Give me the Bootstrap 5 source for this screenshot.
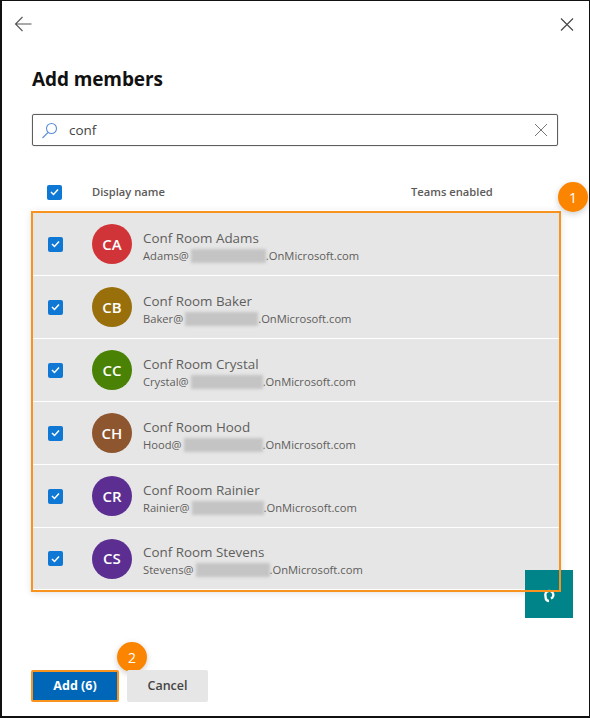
<!DOCTYPE html>
<html lang="en">
<head>
    <meta charset="UTF-8">
    <title>Add members</title>
    <link href="https://cdn.jsdelivr.net/npm/bootstrap@5.3.0/dist/css/bootstrap.min.css" rel="stylesheet">
    <style>
        html, body { margin: 0; height: 100%; background: #fff; }
        body { font-family: "Open Sans", "Noto Sans", sans-serif; color: #323130; }
        .panel-frame { position: relative; width: 590px; height: 718px; border: 2px solid #111; border-top-width: 1px; border-right-width: 1px; overflow: hidden; }
        .top-bar { height: 46px; padding: 14px 15px 0 12px; }
        .panel-title { font-size: 19px; font-weight: 700; color: #111; margin: 17px 0 0 30px; line-height: 30px; letter-spacing: -.1px; }
        .search-box { height: 32px; margin: 20px 31px 0 30px; border: 1px solid #605e5c; border-radius: 2px; padding: 0 9px 0 8px; font-size: 13.5px; color: #444; box-shadow: 0 0 1px #777; }
        .search-text { margin-left: 11px; flex: 1; }
        .head-row { height: 28px; margin: 32px 0 0 45px; font-size: 11.2px; font-weight: 600; color: #5c5a58; }
        .col-name { margin-left: 30px; width: 319px; }
        .check-box { width: 15px; height: 15px; border-radius: 2px; background: #0f78d4; flex: none; display: flex; align-items: center; justify-content: center; }
        .member-box { margin: 4px 0 0 29px; width: 530px; height: 381px; border: 2px solid transparent; padding: 1px 0 0 0; box-shadow: 0 2px 7px rgba(0,0,0,.12); }
        .member-row { height: 62px; margin-bottom: 1px; background: #e6e6e6; padding-left: 15px; }
        .member-row:last-child { margin-bottom: 0; height: 61px; }
        .avatar { width: 40px; height: 40px; border-radius: 50%; color: #fff; font-size: 15px; font-weight: 600; margin-left: 29px; flex: none; }
        .member-info { margin-left: 11px; margin-top: 4px; }
        .member-name { font-size: 13.4px; color: #605e5c; line-height: 18px; }
        .member-mail { font-size: 11.2px; color: #5f5d5b; white-space: nowrap; line-height: 17px; }
        .blur-out { display: inline-block; height: 14px; margin-left: 2px; vertical-align: -3px; background: #c4c4c4; filter: blur(1.5px); }
        .step-badge { position: absolute; width: 30px; height: 30px; border-radius: 50%; background: #fb8500; color: #fff; font-size: 14px; font-weight: 400; display: flex; align-items: center; justify-content: center; box-shadow: 0 2px 6px rgba(0,0,0,.2); }
        .teams-tile { position: absolute; left: 523px; top: 569px; width: 48px; height: 48px; background: #008489; }
        .orange-over { position: absolute; left: 29px; top: 210px; width: 530px; height: 381px; border: 2px solid #f7931e; pointer-events: none; }
        .footer-bar { position: absolute; left: 29px; top: 669px; }
        .btn-add, .btn-add:hover { width: 88px; height: 32px; background: #0067b8; color: #fff; border: 2px solid #f7931e; border-radius: 2px; font-size: 12.5px; font-weight: 700; padding: 0; }
        .btn-cancel, .btn-cancel:hover { width: 81px; height: 32px; background: #e6e6e6; color: #444; border: 0; border-radius: 2px; font-size: 12.5px; font-weight: 600; padding: 0; }
    </style>
</head>
<body>
<div class="panel-frame">
    <div class="top-bar d-flex justify-content-between">
        <svg width="18" height="18" viewBox="0 0 18 18" fill="none" stroke="#555" stroke-width="1.1"><path d="M1.5 9H17.5M8.5 2L1.5 9L8.5 16"/></svg>
        <svg width="14" height="18" viewBox="0 0 14 18" fill="none" stroke="#444" stroke-width="1.1"><path d="M1 3.5L13 15.5M13 3.5L1 15.5"/></svg>
    </div>
    <div class="panel-title">Add members</div>
    <div class="search-box d-flex align-items-center">
        <svg width="17" height="17" viewBox="0 0 17 17" fill="none" stroke="#5a8fd8" stroke-width="1.1"><circle cx="10.5" cy="6.5" r="5"/><path d="M7 10.5L1.5 16"/></svg>
        <span class="search-text">conf</span>
        <svg width="14" height="14" viewBox="0 0 14 14" fill="none" stroke="#777" stroke-width="1"><path d="M1 1L13 13M13 1L1 13"/></svg>
    </div>
    <div class="head-row d-flex align-items-center">
        <span class="check-box"><svg width="9" height="8" viewBox="0 0 9 8" fill="none" stroke="#fff" stroke-width="1.5"><path d="M1 4L3.5 6.5L8 1.5"/></svg></span>
        <span class="col-name">Display name</span>
        <span>Teams enabled</span>
    </div>
    <div class="member-box">
        <div class="member-row d-flex align-items-center">
            <span class="check-box"><svg width="9" height="8" viewBox="0 0 9 8" fill="none" stroke="#fff" stroke-width="1.5"><path d="M1 4L3.5 6.5L8 1.5"/></svg></span>
            <div class="avatar d-flex align-items-center justify-content-center" style="background:#d13438">CA</div>
            <div class="member-info">
                <div class="member-name">Conf Room Adams</div>
                <div class="member-mail">Adams@<span class="blur-out" style="width:75px"></span>.OnMicrosoft.com</div>
            </div>
        </div>
        <div class="member-row d-flex align-items-center">
            <span class="check-box"><svg width="9" height="8" viewBox="0 0 9 8" fill="none" stroke="#fff" stroke-width="1.5"><path d="M1 4L3.5 6.5L8 1.5"/></svg></span>
            <div class="avatar d-flex align-items-center justify-content-center" style="background:#986f0b">CB</div>
            <div class="member-info">
                <div class="member-name">Conf Room Baker</div>
                <div class="member-mail">Baker@<span class="blur-out" style="width:73px"></span>.OnMicrosoft.com</div>
            </div>
        </div>
        <div class="member-row d-flex align-items-center">
            <span class="check-box"><svg width="9" height="8" viewBox="0 0 9 8" fill="none" stroke="#fff" stroke-width="1.5"><path d="M1 4L3.5 6.5L8 1.5"/></svg></span>
            <div class="avatar d-flex align-items-center justify-content-center" style="background:#498205">CC</div>
            <div class="member-info">
                <div class="member-name">Conf Room Crystal</div>
                <div class="member-mail">Crystal@<span class="blur-out" style="width:72px"></span>.OnMicrosoft.com</div>
            </div>
        </div>
        <div class="member-row d-flex align-items-center">
            <span class="check-box"><svg width="9" height="8" viewBox="0 0 9 8" fill="none" stroke="#fff" stroke-width="1.5"><path d="M1 4L3.5 6.5L8 1.5"/></svg></span>
            <div class="avatar d-flex align-items-center justify-content-center" style="background:#8e562e">CH</div>
            <div class="member-info">
                <div class="member-name">Conf Room Hood</div>
                <div class="member-mail">Hood@<span class="blur-out" style="width:79px"></span>.OnMicrosoft.com</div>
            </div>
        </div>
        <div class="member-row d-flex align-items-center">
            <span class="check-box"><svg width="9" height="8" viewBox="0 0 9 8" fill="none" stroke="#fff" stroke-width="1.5"><path d="M1 4L3.5 6.5L8 1.5"/></svg></span>
            <div class="avatar d-flex align-items-center justify-content-center" style="background:#5c2e91">CR</div>
            <div class="member-info">
                <div class="member-name">Conf Room Rainier</div>
                <div class="member-mail">Rainier@<span class="blur-out" style="width:72px"></span>.OnMicrosoft.com</div>
            </div>
        </div>
        <div class="member-row d-flex align-items-center">
            <span class="check-box"><svg width="9" height="8" viewBox="0 0 9 8" fill="none" stroke="#fff" stroke-width="1.5"><path d="M1 4L3.5 6.5L8 1.5"/></svg></span>
            <div class="avatar d-flex align-items-center justify-content-center" style="background:#5c2e91">CS</div>
            <div class="member-info">
                <div class="member-name">Conf Room Stevens</div>
                <div class="member-mail">Stevens@<span class="blur-out" style="width:74px"></span>.OnMicrosoft.com</div>
            </div>
        </div>
    </div>
    <div class="teams-tile">
        <svg width="48" height="48" viewBox="0 0 48 48" fill="none" stroke="#fff" stroke-width="2.4"><path d="M26 28.5A4 4 0 1 0 20.5 26C20.5 29 22 31 24 31"/></svg>
    </div>
    <div class="orange-over"></div>
    <div class="step-badge" style="left:556px;top:181px">1</div>
    <div class="step-badge" style="left:115px;top:641px">2</div>
    <div class="footer-bar d-flex gap-2">
        <button class="btn btn-add">Add (6)</button>
        <button class="btn btn-cancel">Cancel</button>
    </div>
</div>
<script src="https://cdn.jsdelivr.net/npm/bootstrap@5.3.0/dist/js/bootstrap.bundle.min.js"></script>
</body>
</html>
